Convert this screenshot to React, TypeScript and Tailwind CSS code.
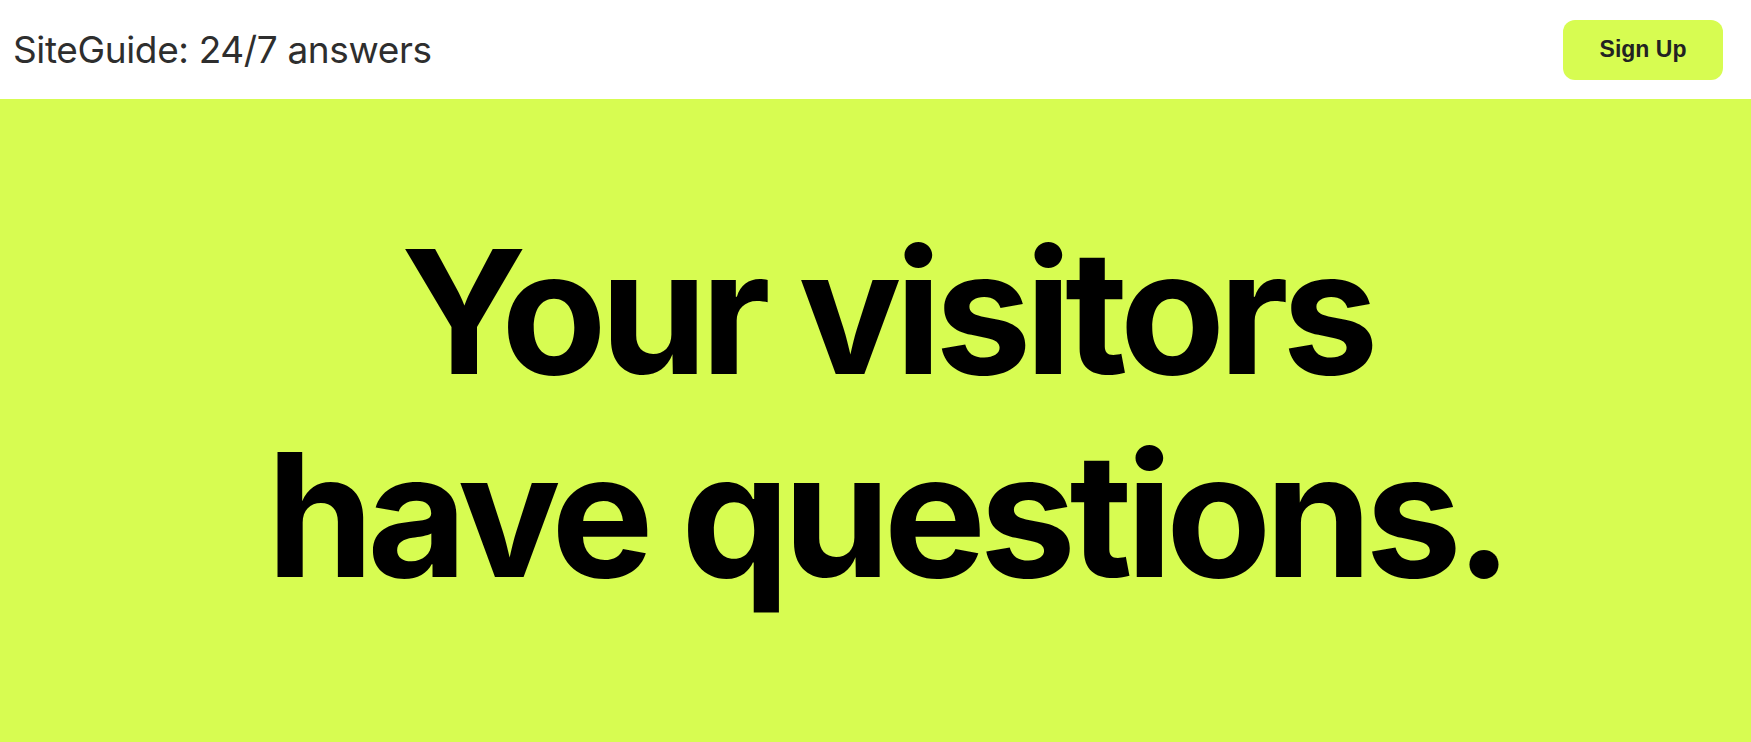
export default function App() {
  return (
    <div className="min-h-screen flex flex-col bg-[#d7fc51] font-['Inter',sans-serif]">
      <header className="h-[99px] bg-white flex items-center justify-between pl-[13px] pr-[28px]">
        <h1 className="text-[37px] font-normal text-[#2e2e2e] tracking-[-0.01em]">SiteGuide: 24/7 answers</h1>
        <button className="w-[160px] h-[60px] rounded-[12px] bg-[#d7fc51] text-[23px] font-bold text-[#222] font-['Liberation_Sans',Arial,sans-serif]">
          Sign Up
        </button>
      </header>

      <main className="flex-1 flex justify-center pt-[111px] pl-[22px]">
        <h2 className="text-center text-[172px] leading-[203px] font-bold text-black tracking-[-0.038em]">
          Your visitors
          <br />
          have questions.
        </h2>
      </main>
    </div>
  );
}
